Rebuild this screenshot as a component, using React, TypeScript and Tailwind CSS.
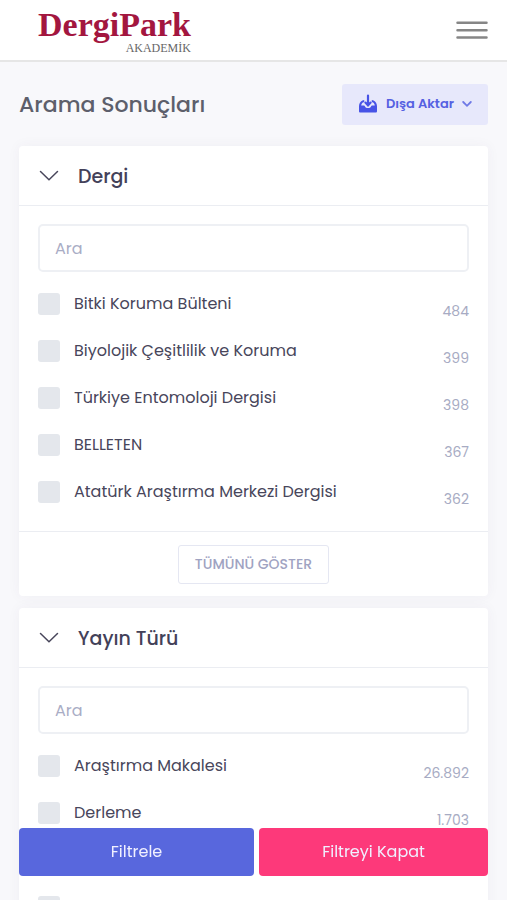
import React from "react";

type Item = { label?: string; count?: string };

const journals: Item[] = [
  { label: "Bitki Koruma Bülteni", count: "484" },
  { label: "Biyolojik Çeşitlilik ve Koruma", count: "399" },
  { label: "Türkiye Entomoloji Dergisi", count: "398" },
  { label: "BELLETEN", count: "367" },
  { label: "Atatürk Araştırma Merkezi Dergisi", count: "362" },
];

const types: Item[] = [
  { label: "Araştırma Makalesi", count: "26.892" },
  { label: "Derleme", count: "1.703" },
  {},
  {},
];

const Header = () => {
  return (
    <header className="flex h-[62px] items-start justify-between border-b-2 border-[#e6e6e6] bg-white pl-[38px] pr-[19px]">
      <a
        href="#"
        className="flex flex-col items-end pt-2 font-['Liberation_Serif',serif]"
      >
        <span className="text-[34px] font-bold leading-[34px] text-[#a3163f]">
          DergiPark
        </span>
        <span className="text-xs leading-none text-[#666666]">AKADEMİK</span>
      </a>
      <button aria-label="Menü" className="mt-5 cursor-pointer">
        <svg width="32" height="20" viewBox="0 0 32 20">
          <path
            d="M1.5 2.8h29M1.5 10.2h29M1.5 17.6h29"
            stroke="#868686"
            strokeWidth="2.5"
            strokeLinecap="round"
          />
        </svg>
      </button>
    </header>
  );
};

const ExportButton = () => {
  return (
    <button className="flex h-[41px] cursor-pointer items-center rounded-[3px] bg-[#e7e8fb] px-4 text-[13px] font-semibold text-[#5560e2]">
      <svg width="20" height="20" viewBox="0 0 20 20" className="mr-2">
        <path
          d="M4.4 6.4C2.2 7.3 1.2 9.4 1 12v5.2c0 .8.5 1.3 1.3 1.3h15.4c.8 0 1.3-.5 1.3-1.3V12c-.2-2.6-1.2-4.700-3.400-5.600L13.800 6v1.900l1.300.7c.9.6 1.500 1.700 1.700 3h-2.600c-.7 0-1 .3-1.200.8-.4 1-1.500 1.600-3 1.600s-2.600-.6-3-1.600c-.2-.5-.5-.8-1.200-.8H3.200c.2-1.300.8-2.400 1.700-3l1.300-.7V6z"
          fill="#4753e6"
        />
        <path
          d="M10 1.6v9.200M7.400 8.600l2.600 2.800 2.600-2.800"
          fill="none"
          stroke="#4753e6"
          strokeWidth="2.2"
          strokeLinecap="round"
        />
      </svg>
      Dışa Aktar
      <svg width="10" height="8" viewBox="0 0 10 8" className="ml-2">
        <path
          d="M1.2 2 5 5.800 8.800 2"
          fill="none"
          stroke="#6f79e6"
          strokeWidth="1.8"
          strokeLinecap="round"
        />
      </svg>
    </button>
  );
};

const FilterRow = ({ item }: { item: Item }) => {
  return (
    <label className="flex h-[47px] cursor-pointer items-center">
      <input
        type="checkbox"
        aria-label={item.label ?? "Seçenek"}
        className="size-[22px] shrink-0 appearance-none rounded-[3px] bg-[#e4e7ec] checked:bg-[#5867dd]"
      />
      <span className="ml-3.5 flex-1 text-base text-[#48465b]">
        {item.label}
      </span>
      <span className="pt-3.5 text-sm text-[#a7abc3]">{item.count}</span>
    </label>
  );
};

const FilterCard = ({
  title,
  items,
  showAll,
}: {
  title: string;
  items: Item[];
  showAll?: boolean;
}) => {
  return (
    <section className="rounded-sm bg-white shadow-[0_0_13px_0_rgba(82,63,105,0.05)]">
      <div className="flex h-[60px] items-center border-b border-[#ebedf2] px-5">
        <svg width="20" height="12" viewBox="0 0 20 12">
          <path
            d="M1.5 1.5 10 9.800l8.500-8.300"
            fill="none"
            stroke="#48465b"
            strokeWidth="1.5"
            strokeLinecap="round"
          />
        </svg>
        <h2 className="ml-[19px] pt-1 text-[19px] font-medium text-[#434159]">
          {title}
        </h2>
      </div>
      <div className="px-[19px] pb-4 pt-[18px]">
        <input
          type="text"
          placeholder="Ara"
          aria-label={`${title} ara`}
          className="mb-2 h-12 w-full rounded-[5px] border-2 border-[#eef0f4] px-[15px] text-base text-[#48465b] outline-none placeholder:text-[#a9adc5]"
        />
        {items.map((item, i) => (
          <FilterRow key={i} item={item} />
        ))}
      </div>
      {showAll && (
        <div className="flex h-[65px] items-center justify-center border-t border-[#ebedf2]">
          <button className="h-[39px] cursor-pointer rounded-[3px] border border-[#e5e7f2] px-4 text-sm font-medium text-[#a0a3c2]">
            TÜMÜNÜ GÖSTER
          </button>
        </div>
      )}
    </section>
  );
};

const App = () => {
  return (
    <div className="h-screen overflow-hidden bg-[#f8f8fb] font-[Poppins,Inter,sans-serif]">
      <Header />
      <main className="px-[19px]">
        <div className="flex h-[84px] items-center justify-between">
          <h1 className="text-[22px] font-medium text-[#5d5f6b]">
            Arama Sonuçları
          </h1>
          <ExportButton />
        </div>
        <div className="flex flex-col gap-3">
          <FilterCard title="Dergi" items={journals} showAll />
          <FilterCard title="Yayın Türü" items={types} />
        </div>
      </main>
      <div className="fixed inset-x-0 bottom-6 grid grid-cols-[235fr_229fr] gap-[5px] px-[19px] text-base text-[#f0f0ff]">
        <button className="h-12 cursor-pointer rounded-sm bg-[#5867dd]">
          Filtrele
        </button>
        <button className="h-12 cursor-pointer rounded-sm bg-[#fd397a]">
          Filtreyi Kapat
        </button>
      </div>
    </div>
  );
};

export default App;
